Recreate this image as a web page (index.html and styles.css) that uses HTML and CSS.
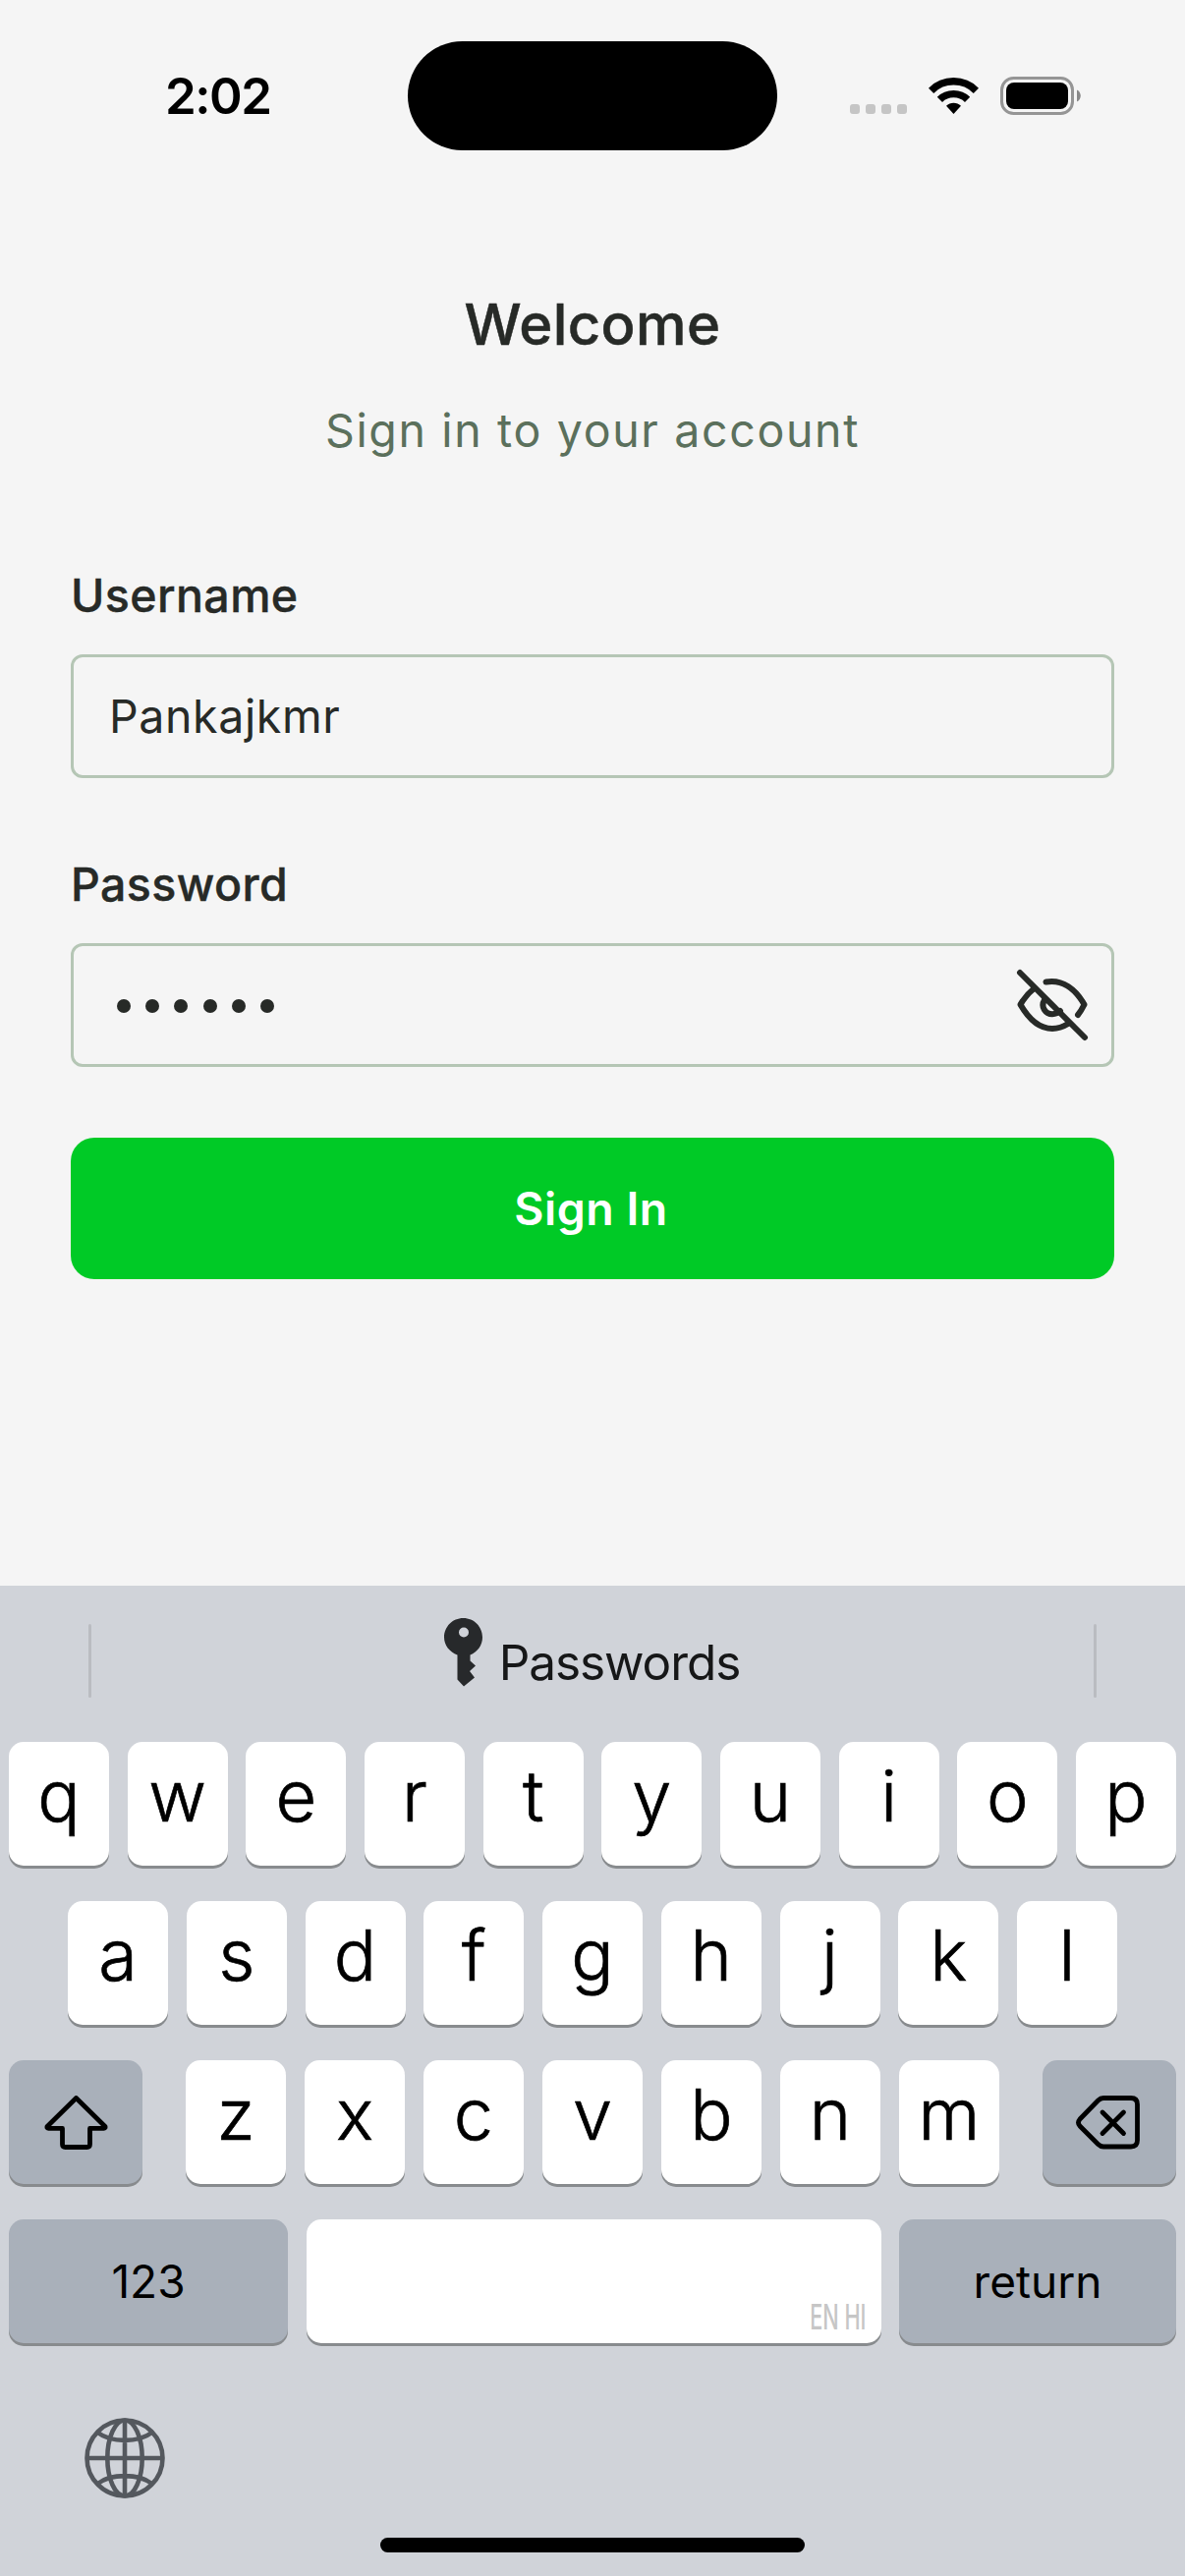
FILE: index.html
```html
<!DOCTYPE html>
<html lang="en">
<head>
<meta charset="utf-8">
<title>Sign In</title>
<link rel="stylesheet" href="styles.css">
</head>
<body>
<div class="screen">
  <header class="status">
    <div class="time"><span>2:02</span></div>
    <div class="island"></div>
    <div class="indicators">
      <svg class="dots" viewBox="0 0 58 10"><rect width="10" height="10" rx="3"/><rect x="16" width="10" height="10" rx="3"/><rect x="32" width="10" height="10" rx="3"/><rect x="48" width="10" height="10" rx="3"/></svg>
      <svg class="wifi" viewBox="0 0 51 38"><g fill="none" stroke="#000" stroke-width="7.4"><path d="M2.6 13.3C15 .6 36 .6 48.400 13.300"/><path d="M11.400 22.300C19 14.700 32 14.700 39.600 22.300"/></g><path d="M18 28.800C22 24.700 29 24.700 33 28.800L25.500 37Z"/></svg>
      <svg class="battery" viewBox="0 0 82 39"><rect x="1.500" y="1.500" width="72" height="36" rx="12" fill="none" stroke="#959595" stroke-width="3"/><rect x="6" y="6" width="63" height="27" rx="8"/><path d="M78 13.500C83 15.500 83 23.500 78 25.500Z" fill="#888"/></svg>
    </div>
  </header>

  <main class="form">
    <h1 class="title"><span>Welcome</span></h1>
    <p class="subtitle"><span>Sign in to your account</span></p>
    <label class="label label-user">Username</label>
    <div class="field"><span class="value">Pankajkmr</span></div>
    <label class="label label-pass">Password</label>
    <div class="field">
      <span class="bullets"><i></i><i></i><i></i><i></i><i></i><i></i></span>
      <svg class="eye" viewBox="0 0 74 74" fill="none" stroke="#272a27" stroke-width="6" stroke-linecap="round" stroke-linejoin="round"><path d="M4 4L70 70"/><path d="M18.500 20C13.500 24 8.500 29.500 4.500 36.500C12 49.500 23 61 37 61C43.500 61 48.500 58.800 53 56"/><path d="M30.500 13.500C48 10.500 61 21.500 69.500 36.500C67.500 40.500 65.500 44 63 47"/><path d="M29.500 31C24 39 30.500 46.200 37 46.200C40.500 46.200 43 45 45 43"/></svg>
    </div>
    <button class="submit"><span>Sign In</span></button>
  </main>

  <section class="keyboard">
    <div class="suggest">
      <span class="rule"></span>
      <div class="hint">
        <svg class="key-icon" viewBox="0 0 39 70"><path fill-rule="evenodd" d="M19.500 0C30.500 0 39 8.800 39 19.500C39 27.500 34 34.500 26.500 37.500V43.500L32 48.500L26 54L31 60.500L20 69.500L13.500 62.500V37.500C5.500 34.500 0 27.500 0 19.500C0 8.800 8.500 0 19.500 0ZM20 9.500A5 5 0 1 0 20 19.500A5 5 0 1 0 20 9.500Z"/></svg>
        <span class="hint-text">Passwords</span>
      </div>
      <span class="rule"></span>
    </div>
    <div class="keys">
      <div class="row"><b>q</b><b>w</b><b>e</b><b>r</b><b>t</b><b>y</b><b>u</b><b>i</b><b>o</b><b>p</b></div>
      <div class="row row-mid"><b>a</b><b>s</b><b>d</b><b>f</b><b>g</b><b>h</b><b>j</b><b>k</b><b>l</b></div>
      <div class="row">
        <b class="fn side"><svg class="shift" viewBox="0 0 64 55" fill="none" stroke="#000" stroke-width="4.800" stroke-linejoin="round"><path d="M32 2.500L61.500 31.500Q62 33.300 60 33.400H46V49.500Q46 52.500 43 52.500H21Q18 52.500 18 49.500V33.400H4Q2 33.300 2.500 31.500Z"/></svg></b>
        <div class="row letters"><b>z</b><b>x</b><b>c</b><b>v</b><b>b</b><b>n</b><b>m</b></div>
        <b class="fn side"><svg class="del" viewBox="0 0 65 55" fill="none" stroke="#000" stroke-width="4.800" stroke-linecap="round" stroke-linejoin="round"><path d="M28 2.500H56Q62.500 2.500 62.500 9V45.500Q62.500 52 56 52H28Q25 52 22.500 49.500L4 31Q1 27.500 4 24L22.500 5Q25 2.500 28 2.500Z"/><path d="M27 17L48.500 38.500M48.500 17L27 38.500"/></svg></b>
      </div>
      <div class="row">
        <b class="fn num"><span>123</span></b>
        <b class="space"><span class="langs">EN HI</span></b>
        <b class="fn return"><span>return</span></b>
      </div>
    </div>
    <div class="dock">
      <svg class="globe" viewBox="0 0 82 82" fill="none" stroke="#54585e" stroke-width="4.600"><circle cx="41" cy="41" r="38.500"/><ellipse cx="41" cy="41" rx="17.700" ry="38.500"/><path d="M41 2V80M2 41H80M13.500 15C27 25.500 55 25.500 68.500 15M13.500 67C27 56.500 55 56.500 68.500 67"/></svg>
      <div class="home"></div>
    </div>
  </section>
</div>
</body>
</html>
```
FILE: styles.css
```css
* { box-sizing: border-box; margin: 0; padding: 0; }
body { width: 1206px; background: #f5f5f5; font-family: Inter, "Liberation Sans", sans-serif; }
.screen { width: 1206px; height: 2622px; display: flex; flex-direction: column; overflow: hidden; }

.status { height: 194px; display: grid; grid-template-columns: 415px 376px 415px; align-items: start; }
.time { padding: 67px 0 0 168px; font-size: 51px; line-height: 62px; font-weight: 600; letter-spacing: -1.500px; white-space: nowrap; }
.island { margin-top: 41.500px; height: 111px; border-radius: 56px; background: #000; }
.indicators { display: flex; align-items: flex-end; padding: 78px 0 0 74px; }
.indicators svg { display: block; flex: none; }
.dots { width: 58px; height: 10px; fill: #c5c5c5; margin-bottom: 1px; }
.wifi { width: 51px; height: 38px; margin-left: 22px; }
.battery { width: 82px; height: 39px; margin-left: 22px; }

.form { height: 1420px; padding: 100px 72px 0; display: flex; flex-direction: column; color: #272a27; }
.title { height: 72px; line-height: 72px; font-size: 58px; font-weight: 500; text-align: center; letter-spacing: 0.400px; -webkit-text-stroke: 0.500px currentColor; }
.subtitle { margin-top: 36px; height: 72px; line-height: 72px; font-size: 46.500px; font-weight: 400; text-align: center; letter-spacing: 1.650px; color: #5b705c; }
.label { height: 60px; line-height: 60px; font-size: 46.500px; font-weight: 500; letter-spacing: 0.400px; -webkit-text-stroke: 0.400px currentColor; }
.label-user { margin-top: 102px; }
.label-pass { margin-top: 78px; }
.field { height: 126px; margin-top: 30px; border: 3px solid #b5c6b5; border-radius: 12px; display: flex; align-items: center; justify-content: space-between; padding: 0 23px 0 36px; }
.value { font-size: 46.500px; letter-spacing: 0.600px; }
.bullets { display: flex; gap: 15.200px; padding: 2px 0 0 8px; }
.bullets i { width: 14px; height: 14px; border-radius: 50%; background: #272a27; }
.eye { width: 74px; height: 74px; }
.submit { margin-top: 72px; height: 144px; border: 0; border-radius: 24px; background: #00ca26; color: #fff; font: 600 46.500px/144px Inter, sans-serif; letter-spacing: 0.500px; padding-right: 3px; }

.keyboard { flex: 1; background: #d0d3d9; display: flex; flex-direction: column; }
.suggest { height: 159px; padding: 33px 90px 0; display: flex; justify-content: space-between; align-items: flex-start; }
.rule { width: 3px; height: 75px; margin-top: 6px; border-radius: 2px; background: #babcc1; }
.hint { display: flex; color: #161718; }
.key-icon { width: 39px; height: 70px; fill: #27292b; }
.hint-text { margin: 15px 1px 0 17px; font-size: 49.500px; line-height: 60px; letter-spacing: -1.100px; }
.keys { padding: 0 9px; display: flex; flex-direction: column; gap: 36px; }
.row { display: flex; justify-content: space-between; }
.row-mid { padding: 0 60px; }
.letters { width: 828px; }
.row b { width: 102px; height: 126px; border-radius: 15px; background: #fff; box-shadow: 0 3px 0 #888b8e; display: block; text-align: center; font-size: 72px; font-weight: 300; line-height: 110px; -webkit-text-stroke: 0.700px #000; }
.row b.fn { background: #a9b0ba; -webkit-text-stroke: 0; }
.row b.side { width: 136px; display: flex; align-items: center; justify-content: center; }
.shift, .del { width: 65px; height: 55px; }
.del { margin-right: 3px; }
.row b.num { width: 284px; font-size: 46px; font-weight: 400; line-height: 126px; }
.row b.return { width: 282px; font-size: 46px; font-weight: 400; line-height: 126px; }
.row b.space { width: 585px; display: flex; justify-content: flex-end; align-items: flex-end; padding: 0 15px 6px 0; -webkit-text-stroke: 0; }
.langs { font-size: 35px; line-height: 42px; font-weight: 500; color: #c6c6c6; transform: scaleX(.62); transform-origin: right; }
.dock { flex: 1; display: grid; grid-template-rows: 81px 15px; row-gap: 41px; padding-top: 76px; }
.globe { width: 82px; height: 82px; margin-left: 86px; }
.home { width: 432px; height: 15px; border-radius: 8px; background: #000; justify-self: center; }
```
